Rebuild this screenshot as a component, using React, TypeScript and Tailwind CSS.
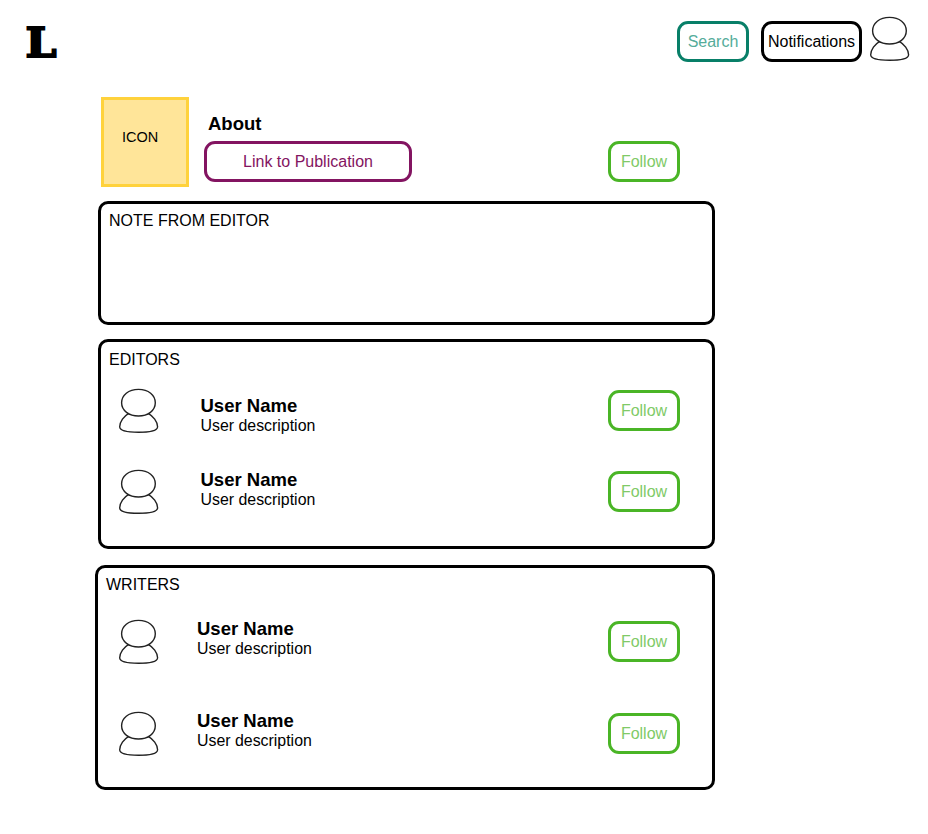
import React from "react";

function Avatar() {
  return (
    <svg className="block h-[46px] w-[42px] shrink-0" viewBox="0 0 42 46" fill="none" stroke="#222" strokeWidth="1.4">
      <path d="M10.8 25.3C6 28 1.7 33.5 1.7 38.8C1.7 43 10 44.3 20.5 44.3C31 44.3 39.6 43 39.6 38.8C39.6 33.5 35 28 30.2 25.3" />
      <path
        d="M20.5 1.4C30.5 1.4 37.3 7 37.3 14.8C37.3 22.6 30 28 20.5 28C11 28 3.6 22.6 3.6 14.8C3.6 7 10.5 1.4 20.5 1.4Z"
        fill="#fff"
      />
    </svg>
  );
}

function Follow() {
  return (
    <button className="h-[41px] w-[72px] shrink-0 rounded-[11px] border-[3px] border-[#4ab526] text-[#80ca67]">
      Follow
    </button>
  );
}

function User({ row, text }: { row: string; text: string }) {
  return (
    <div className={"flex items-start " + row}>
      <Avatar />
      <div className={"flex-1 " + text}>
        <div className="text-[18.5px] font-bold leading-[20px]">User Name</div>
        <div className="text-[15.9px] leading-[19px]">User description</div>
      </div>
      <div className="pt-[2px]">
        <Follow />
      </div>
    </div>
  );
}

export default function App() {
  return (
    <div className="h-[834px] w-[928px] overflow-hidden bg-white font-['Liberation_Sans',Arial,sans-serif] text-base leading-[20px] text-black">
      <header className="flex h-[97px] items-start pl-[25px] pr-[17px]">
        <svg className="mt-[16px] h-[51px] w-[40px]" viewBox="0 0 40 51">
          <text
            x="0.6"
            y="41.2"
            fontFamily="'DejaVu Serif', serif"
            fontSize="41.5"
            fontWeight="bold"
            stroke="#000"
            strokeWidth="2"
            textLength="31"
            lengthAdjust="spacingAndGlyphs"
          >
            L
          </text>
        </svg>
        <div className="ml-auto flex">
          <button className="mt-[21px] h-[41px] w-[72px] rounded-[11px] border-[3px] border-[#087f68] text-[#55ac9a]">
            Search
          </button>
          <button className="mr-[7px] mt-[21px] ml-[12px] h-[41px] w-[101px] rounded-[11px] border-[3px] border-black">
            <span className="-mx-2">Notifications</span>
          </button>
          <div className="pt-[16px]">
            <Avatar />
          </div>
        </div>
      </header>
      <main className="ml-[95px] w-[620px]">
        <section className="flex h-[104px] pl-[5.5px] pr-[35px]">
          <div className="h-[90px] w-[88px] border-[3px] border-[#ffd23c] bg-[#ffe599] pl-[18.5px] pt-[27px] text-[14.5px]">
            ICON
          </div>
          <div className="ml-[15.5px] pt-[16px]">
            <h1 className="pl-[4px] text-[18.5px] font-bold leading-[22px]">About</h1>
            <button className="mt-[6px] h-[41px] w-[208px] rounded-[11px] border-[3px] border-[#831461] text-[#831461]">
              Link to Publication
            </button>
          </div>
          <div className="ml-auto pt-[44px]">
            <Follow />
          </div>
        </section>
        <section className="ml-[3px] h-[124px] w-[617px] rounded-[10px] border-[3px] border-black pl-[8px] pt-[7px]">
          NOTE FROM EDITOR
        </section>
        <section className="ml-[3px] mt-[14px] h-[210px] w-[617px] rounded-[10px] border-[3px] border-black pl-[8px] pr-[32px] pt-[7.5px]">
          <h2>EDITORS</h2>
          <User row="ml-[9px] mt-[18.5px] h-[81px]" text="pl-[40.5px] pt-[8px]" />
          <User row="ml-[9px]" text="pl-[40.5px] pt-px" />
        </section>
        <section className="mt-[16px] h-[225px] w-[620px] rounded-[10px] border-[3px] border-black pl-[8px] pr-[32px] pt-[7px]">
          <h2>WRITERS</h2>
          <User row="ml-[12px] mt-[24px] h-[92px]" text="pl-[37px]" />
          <User row="ml-[12px]" text="pl-[37px]" />
        </section>
      </main>
    </div>
  );
}
